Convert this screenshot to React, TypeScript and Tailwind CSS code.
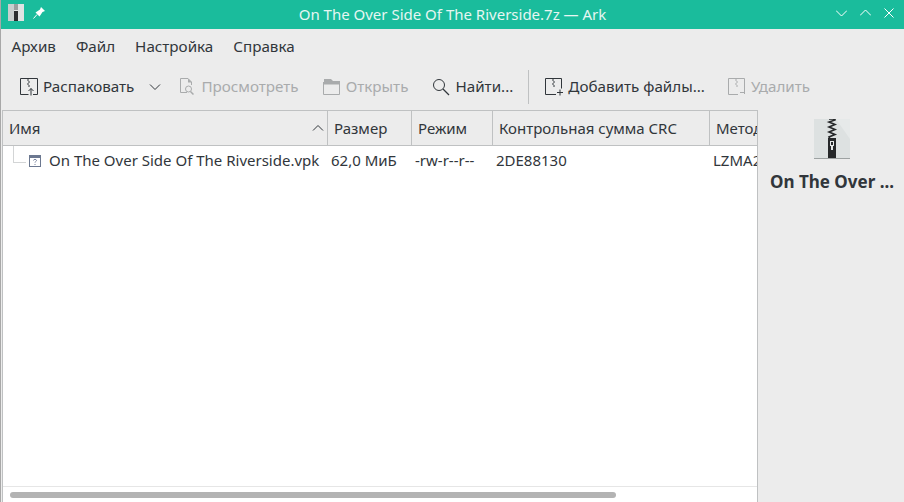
import { ReactNode } from 'react';

function ZipIcon({ add, extract, muted }: { add?: boolean; extract?: boolean; muted?: boolean }) {
  const c = muted ? '#a9abac' : '#31363b';
  return (
    <svg width="18" height="18" viewBox="0 0 18 18" fill="none" className="shrink-0">
      <path
        d={extract ? 'M9 .5H.5v16h8M13 16.500h4.500V.5H9' : add ? 'M.5 .5h16v10M11 16.500H.5V.5' : 'M.5 .5h16v15.500M10 16.500H.5V.5'}
        stroke={c}
      />
      <path d="M7 2h2M8 4h2M7 6h2M8 8h2" stroke={c} />
      {extract && <path d="M11 17.500v-7M8.500 13l2.500-2.500 2.500 2.500" stroke={c} />}
      {add && <path d="M15 11.500v6M12 14.500h6" stroke={c} />}
      {!extract && !add && <path d="M12 14.500h5" stroke={c} />}
    </svg>
  );
}

function ToolButton({ icon, label, muted }: { icon: ReactNode; label: string; muted?: boolean }) {
  return (
    <div className={`flex items-center gap-[5px] text-[15.200px] ${muted ? 'text-[#a9abac]' : 'text-[#31363b]'}`}>
      {icon}
      <span className="-translate-y-px">{label}</span>
    </div>
  );
}

function HeaderCell({ label, width, children }: { label: string; width: string; children?: ReactNode }) {
  return (
    <div className={`flex h-full shrink-0 items-center justify-between border-r border-[#bfc1c2] pl-[6px] ${width}`}>
      <span>{label}</span>
      {children}
    </div>
  );
}

export default function App() {
  return (
    <div
      className="flex h-[502px] w-[904px] flex-col overflow-hidden border-l border-[#a8a8a8] bg-[#ececec] text-[#31363b]"
      style={{ fontFamily: '"Noto Sans", sans-serif' }}
    >
      {/* title bar */}
      <div className="relative flex h-[29px] shrink-0 items-center bg-[#1abc9c] pl-[7px] text-white">
        <svg width="16" height="17" viewBox="0 0 16 17" className="-mt-[4px] shrink-0">
          <rect width="16" height="17" fill="#dfe3e3" />
          <path d="M0 0h6v17H0z" fill="#c9cfcf" />
          <rect x="6" y="7" width="4" height="10" fill="#2b2e30" />
          <path d="M6 1h4M6 3h4M6 5h4" stroke="#55595b" />
        </svg>
        <svg width="14" height="14" viewBox="0 0 14 14" fill="none" className="ml-[8px] -mt-[3px]">
          <path d="M1.500 12.500 5 8.500" stroke="#fff" />
          <path d="M3.500 6.500 8 3.500l1-2.500 4 4-2.500 1-3 4.500z" fill="#fff" />
        </svg>
        <span className="absolute left-0 right-0 text-center text-[15px] text-[#e6f6f2]">
          On The Over Side Of The Riverside.7z — Ark
        </span>
        <div className="ml-auto flex items-center gap-[13px] pr-[10px] -mt-[3px]">
          <svg width="11" height="10" viewBox="0 0 11 10" fill="none">
            <path d="M0 2.500 5.500 8 11 2.500" stroke="#fff" />
          </svg>
          <svg width="11" height="10" viewBox="0 0 11 10" fill="none">
            <path d="M0 7.500 5.500 2 11 7.500" stroke="#fff" />
          </svg>
          <svg width="10" height="10" viewBox="0 0 10 10" fill="none">
            <path d="M.5 .5l9 9M9.500 .5l-9 9" stroke="#fff" />
          </svg>
        </div>
      </div>

      {/* menu bar */}
      <div className="flex h-[36px] shrink-0 items-center gap-[20px] pb-[2px] pl-[10.500px] text-[15.200px]">
        <span>Архив</span>
        <span>Файл</span>
        <span>Настройка</span>
        <span>Справка</span>
      </div>

      {/* toolbar */}
      <div className="flex h-[44px] shrink-0 items-center pl-[19px]">
        <ToolButton icon={<ZipIcon extract />} label="Распаковать" />
        <svg width="12" height="8" viewBox="0 0 12 8" fill="none" className="ml-[15px]">
          <path d="M1 1.500 6 6.500l5-5" stroke="#31363b" />
        </svg>
        <div className="ml-[17px]">
          <ToolButton
            muted
            label="Просмотреть"
            icon={
              <svg width="18" height="18" viewBox="0 0 18 18" fill="none" className="shrink-0">
                <path d="M9 14.500H2.500V.5H10l3.500 3.500v3" stroke="#a9abac" />
                <path d="M10 .5v4h4z" fill="#a9abac" />
                <circle cx="10.500" cy="11" r="3" stroke="#a9abac" />
                <path d="m12.500 13.500 3 3" stroke="#a9abac" strokeWidth="1.500" />
              </svg>
            }
          />
        </div>
        <div className="ml-[24px]">
          <ToolButton
            muted
            label="Открыть"
            icon={
              <svg width="18" height="18" viewBox="0 0 18 18" fill="none" className="shrink-0">
                <path d="M1 1h7l2 2h7v3H1z" fill="#a9abac" />
                <path d="M.5 4v12.500h16V6M1 6h16" stroke="#a9abac" />
              </svg>
            }
          />
        </div>
        <div className="ml-[24px]">
          <ToolButton
            label="Найти..."
            icon={
              <svg width="18" height="18" viewBox="0 0 18 18" fill="none" className="shrink-0">
                <circle cx="7" cy="7" r="5.500" stroke="#31363b" />
                <path d="m11 11 6 6" stroke="#31363b" strokeWidth="1.300" />
              </svg>
            }
          />
        </div>
        <div className="ml-[15px] mr-[16px] h-[34px] w-px bg-[#bfc1c2]" />
        <ToolButton icon={<ZipIcon add />} label="Добавить файлы..." />
        <div className="ml-[23px]">
          <ToolButton muted icon={<ZipIcon muted />} label="Удалить" />
        </div>
      </div>

      {/* content */}
      <div className="mt-[1px] flex min-h-0 flex-1">
        <div className="ml-[1px] flex w-[756px] shrink-0 flex-col overflow-hidden border border-b-0 border-[#bfc1c2] bg-white">
          <div className="flex h-[35px] shrink-0 items-center border-b border-[#bfc1c2] bg-[#ececec] text-[15px]">
            <HeaderCell label="Имя" width="w-[325px]">
              <svg width="12" height="8" viewBox="0 0 12 8" fill="none" className="mr-[3px]">
                <path d="M1 6.500 6 1.500l5 5" stroke="#31363b" />
              </svg>
            </HeaderCell>
            <HeaderCell label="Размер" width="w-[84px]" />
            <HeaderCell label="Режим" width="w-[81px]" />
            <HeaderCell label="Контрольная сумма CRC" width="w-[217px]" />
            <div className="h-full overflow-hidden whitespace-nowrap pl-[6px] leading-[34px]">Метод</div>
          </div>

          <div className="flex h-[30px] shrink-0 items-center overflow-hidden whitespace-nowrap text-[15px]">
            <div className="relative flex h-full w-[325px] shrink-0 items-center pl-[26px]">
              <div className="absolute left-[10px] top-0 h-[17px] w-[13px] border-b border-l border-[#d3d5d6]" />
              <svg width="12" height="12" viewBox="0 0 12 12" fill="none" className="shrink-0">
                <rect x=".5" y=".5" width="11" height="11" fill="#fff" stroke="#6c7890" />
                <rect width="12" height="3" fill="#6c7890" />
                <path d="M4.500 5.500c0-1.500 3-1.500 3 0 0 1-1.500 1-1.500 2M6 9v1" stroke="#7a84a0" />
              </svg>
              <span className="ml-[8px] -translate-y-px">On The Over Side Of The Riverside.vpk</span>
            </div>
            <span className="w-[84px] shrink-0 -translate-y-px pl-[3px]">62,0 МиБ</span>
            <span className="w-[81px] shrink-0 -translate-y-px pl-[3px]">-rw-r--r--</span>
            <span className="w-[220px] shrink-0 -translate-y-px pl-[3px]">2DE88130</span>
            <span className="-translate-y-px">LZMA2</span>
          </div>

          <div className="flex-1" />
          <div className="flex h-[16px] shrink-0 items-center border-t border-[#e6e6e6] pl-[7px] pt-[1px]">
            <div className="h-[6px] w-[606px] rounded-full bg-[#b3b3b3]" />
          </div>
        </div>

        {/* info panel */}
        <div className="flex min-w-0 flex-1 flex-col items-center pl-[2px] pt-[9px]">
          <svg width="36" height="40" viewBox="0 0 36 40" className="shrink-0">
            <rect width="36" height="40" fill="#dde1e1" />
            <path d="M22 0h14v20z" fill="#e6e9e9" />
            <rect y="39" width="36" height="1" fill="#9da2a2" />
            <path d="M15 0h6v1l-6 2 6 2.500-6 2.500 6 2.500-6 2.500 6 2.500-6 2.500 1 2" fill="none" stroke="#26282a" strokeWidth="1.600" />
            <rect x="14" y="19" width="8" height="20" fill="#26282a" />
            <rect x="16.500" y="22.500" width="3" height="4" fill="none" stroke="#e3e6e6" />
            <rect x="17" y="27" width="2" height="4" fill="#e3e6e6" />
          </svg>
          <span className="mt-[10px] whitespace-nowrap text-[17px] font-bold text-[#31363b]">On The Over ...</span>
        </div>
      </div>
    </div>
  );
}
